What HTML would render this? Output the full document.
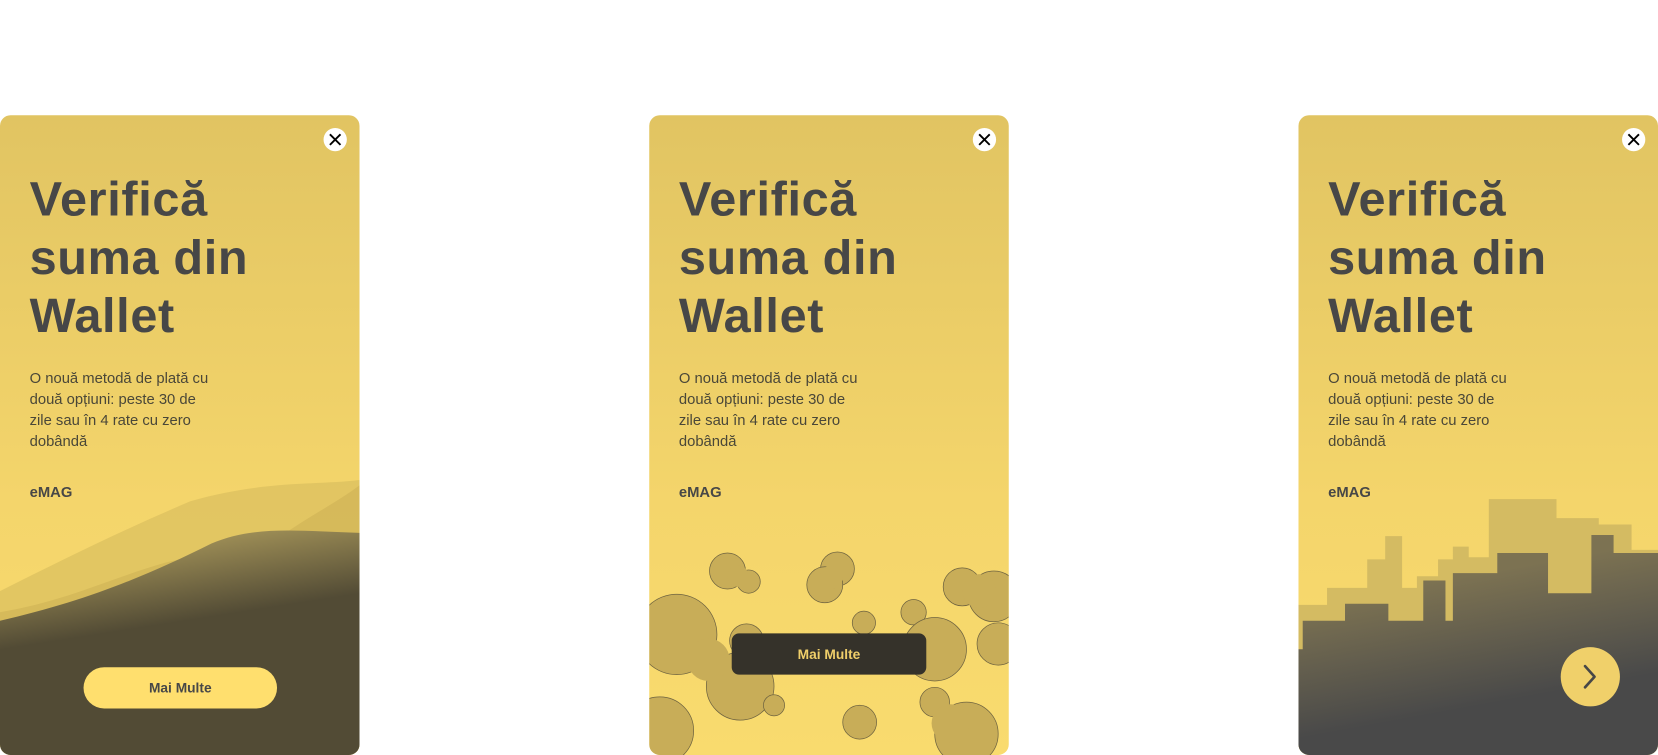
<!DOCTYPE html>
<html><head><meta charset="utf-8"><style>
html,body{margin:0;padding:0;background:#fff;width:1658px;height:755px;overflow:hidden}
#w{position:absolute;left:0;top:0;width:1568px;height:714px;transform:scale(1.05740);transform-origin:0 0}
.card{position:absolute;top:109px;width:340px;height:605px;border-radius:10px;overflow:hidden;background:linear-gradient(180deg,#e1c462 0%,#f4d56b 60%,#f9db6e 100%);font-family:"Liberation Sans",sans-serif;color:#474747}
.card svg.bg{position:absolute;left:0;top:0}
h1{position:absolute;left:28px;top:52px;margin:0;font-size:46px;line-height:55px;font-weight:bold;color:#474747;letter-spacing:0.6px}
p{position:absolute;left:28px;top:238px;margin:0;width:176px;font-size:14px;line-height:20px;color:#4a4738}
.em{position:absolute;left:28px;top:348px;font-size:14px;font-weight:bold;color:#474747}
.x{position:absolute;left:306px;top:12px;width:22px;height:22px;border-radius:50%;background:#fff}
.btn{position:absolute;display:flex;align-items:center;justify-content:center;font-size:13px;font-weight:bold}
</style></head><body><div id="w">

<div class="card" style="left:0">
<svg class="bg" width="340" height="605" viewBox="0 0 340 605">
<defs><linearGradient id="g1" x1="0" y1="0" x2="0.25" y2="1"><stop offset="0" stop-color="#c2ae66"/><stop offset="0.5" stop-color="#524b35"/><stop offset="1" stop-color="#524b35"/></linearGradient></defs>
<path d="M0 450 C60 420 110 395 180 365 C250 345 300 350 340 345 L340 605 L0 605Z" fill="#d6bb5c" opacity="0.6"/>
<path d="M0 470 C60 460 100 440 150 425 C200 410 240 418 270 395 C300 375 320 365 340 350 L340 605 L0 605Z" fill="#c9ad52" opacity="0.5"/>
<path d="M0 478 C80 460 140 435 200 405 C240 388 280 393 340 395 L340 605 L0 605Z" fill="url(#g1)"/>
</svg>
<h1>Verifică<br>suma din<br>Wallet</h1>
<p>O nouă metodă de plată cu două opțiuni: peste 30 de zile sau în 4 rate cu zero dobândă</p>
<div class="em">eMAG</div>
<div class="x"><svg width="22" height="22"><path d="M6 6L16 16M16 6L6 16" stroke="#000" stroke-width="1.8"/></svg></div>
<div class="btn" style="left:79px;top:522px;width:183px;height:39px;border-radius:20px;background:#ffdf6e;color:#474747">Mai Multe</div>
</div>

<div class="card" style="left:614px">
<svg class="bg" width="340" height="605" viewBox="0 0 340 605">
<g fill="#c8ad58" stroke="#6e6340" stroke-width="0.7">
<circle cx="74" cy="431" r="17"/><circle cx="94" cy="441" r="11"/>
<circle cx="178" cy="429" r="16"/><circle cx="166" cy="444" r="17"/>
<circle cx="203" cy="480" r="11"/><circle cx="250" cy="470" r="12"/>
<circle cx="26" cy="491" r="38"/><circle cx="92" cy="497" r="16"/>
<circle cx="86" cy="540" r="32"/><circle cx="118" cy="558" r="10"/>
<circle cx="10" cy="582" r="32"/>
<circle cx="199" cy="574" r="16"/>
<circle cx="296" cy="446" r="18"/><circle cx="326" cy="455" r="24"/><circle cx="330" cy="500" r="20"/>
<circle cx="270" cy="505" r="30"/><circle cx="300" cy="585" r="30"/><circle cx="270" cy="555" r="14"/>
</g>
<g fill="#c8ad58">
<circle cx="84" cy="436" r="10"/><circle cx="172" cy="437" r="11"/><circle cx="56" cy="515" r="20"/><circle cx="312" cy="450" r="16"/><circle cx="285" cy="575" r="18"/>
</g>
</svg>
<h1>Verifică<br>suma din<br>Wallet</h1>
<p>O nouă metodă de plată cu două opțiuni: peste 30 de zile sau în 4 rate cu zero dobândă</p>
<div class="em">eMAG</div>
<div class="x"><svg width="22" height="22"><path d="M6 6L16 16M16 6L6 16" stroke="#000" stroke-width="1.8"/></svg></div>
<div class="btn" style="left:78px;top:490px;width:184px;height:39px;border-radius:7px;background:#35322a;color:#f0cf6a">Mai Multe</div>
</div>

<div class="card" style="left:1228px">
<svg class="bg" width="340" height="605" viewBox="0 0 340 605">
<defs><linearGradient id="g3" x1="0" y1="0" x2="0.3" y2="1"><stop offset="0" stop-color="#807554"/><stop offset="0.3" stop-color="#7c7252"/><stop offset="0.85" stop-color="#494949"/><stop offset="1" stop-color="#494949"/></linearGradient></defs>
<path d="M0 463 L27 463 L27 447 L65 447 L65 420 L82 420 L82 398 L98 398 L98 447 L112 447 L112 436 L132 436 L132 420 L146 420 L146 408 L161 408 L161 418 L180 418 L180 363 L244 363 L244 381 L284 381 L284 387 L315 387 L315 411 L340 411 L340 605 L0 605Z" fill="#d4bb62"/>
<path d="M0 505 L4 505 L4 478 L44 478 L44 462 L85 462 L85 478 L118 478 L118 440 L139 440 L139 478 L146 478 L146 433 L188 433 L188 414 L236 414 L236 452 L277 452 L277 397 L298 397 L298 414 L340 414 L340 605 L0 605Z" fill="url(#g3)"/>
</svg>
<h1>Verifică<br>suma din<br>Wallet</h1>
<p>O nouă metodă de plată cu două opțiuni: peste 30 de zile sau în 4 rate cu zero dobândă</p>
<div class="em">eMAG</div>
<div class="x"><svg width="22" height="22"><path d="M6 6L16 16M16 6L6 16" stroke="#000" stroke-width="1.8"/></svg></div>
<div style="position:absolute;left:248px;top:503px;width:56px;height:56px;border-radius:50%;background:#f0d06a"><svg width="56" height="56"><path d="M23 18L32 28L23 38" fill="none" stroke="#474747" stroke-width="2.5" stroke-linecap="round" stroke-linejoin="round"/></svg></div>
</div>

</div></body></html>
